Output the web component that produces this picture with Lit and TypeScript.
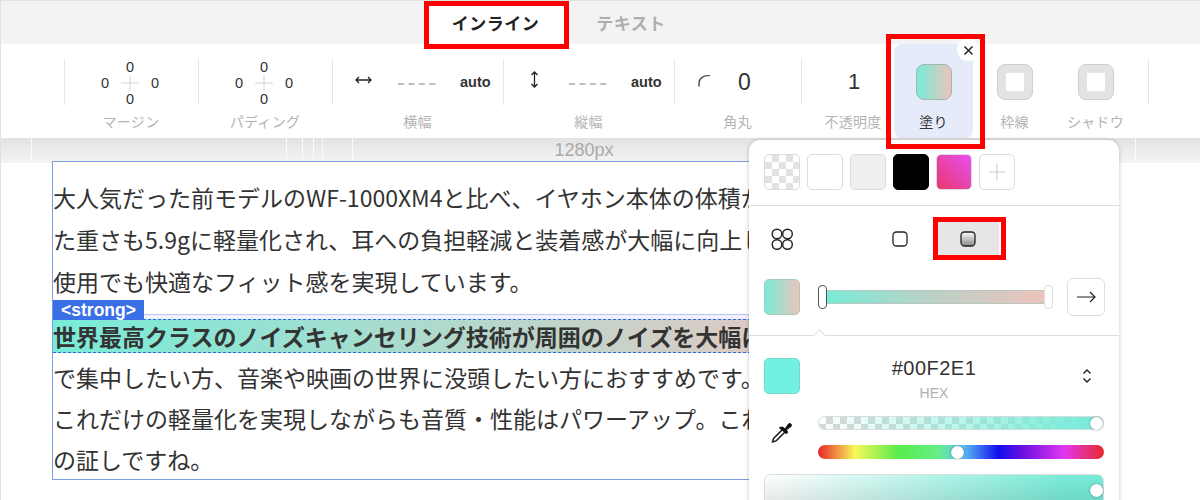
import { LitElement, html, css } from "lit";
import { customElement } from "lit/decorators.js";

const crossValue = () => html`<div class="cross">
  <span class="c-t">0</span><span class="c-l">0</span>
  <svg class="c-m" width="18" height="18" viewBox="0 0 18 18"><path d="M0 9H18M9 1V17" stroke="#d4d4d4" fill="none"/></svg>
  <span class="c-r">0</span><span class="c-b">0</span>
</div>`;

@customElement("app-root")
export class AppRoot extends LitElement {
  static styles = css`
    :host { display: block; width: 1200px; height: 500px; font-family: "Liberation Sans", "Noto Sans CJK JP", sans-serif; }
    * { box-sizing: border-box; }
    .app { position: relative; width: 1200px; height: 500px; overflow: hidden; display: flex; flex-direction: column; background: #fff; border-left: 1px solid #e2e2e2; border-top: 1px solid #e2e2e2; }

    .tabs { height: 43px; flex: none; background: #f3f3f3; display: flex; padding-left: 423px; }
    .tab { height: 43px; display: flex; align-items: center; justify-content: center; font: 700 17px "Noto Sans CJK JP", sans-serif; letter-spacing: .5px; }
    .tab.on { width: 143px; color: #222; background: #fff; }
    .tab.off { width: 128px; color: #aeaeae; }

    .toolbar { height: 94px; flex: none; background: #fff; display: flex; padding-left: 63px; }
    .group { display: flex; flex-direction: column; flex: none; }
    .ctl { height: 46px; margin-top: 15px; border-left: 1px solid #e6e6e6; display: flex; align-items: center; position: relative; }
    .lbl { font: 400 14px/20px "Noto Sans CJK JP", sans-serif; color: #b4b4b4; text-align: center; margin-top: 6px; letter-spacing: .3px; white-space: nowrap; }
    .w134 { width: 134px; } .w171 { width: 171px; } .w127 { width: 127px; }

    .cross { width: 70px; height: 46px; margin: 1px 0 0 30px; display: grid; grid-template-columns: 1fr 18px 1fr; grid-template-rows: 1fr 18px 1fr; place-items: center; font-size: 14.5px; color: #333; line-height: 14px; column-gap: 6px; }
    .c-t { grid-column: 2; grid-row: 1; } .c-l { grid-column: 1; grid-row: 2; } .c-m { grid-column: 2; grid-row: 2; } .c-r { grid-column: 3; grid-row: 2; } .c-b { grid-column: 2; grid-row: 3; }

    .size { padding-left: 22px; }
    .size svg { flex: none; margin-top: -5px; }
    .dash { width: 40px; margin-left: 25px; color: #bcbcbc; font-size: 24px; letter-spacing: 2.4px; white-space: nowrap; }
    .auto { margin-left: 23px; font-size: 14.5px; font-weight: 700; color: #333; }
    .radius { padding-left: 23px; }
    .radius svg { margin-top: -3px; }
    .radius b { font-weight: 400; font-size: 23px; color: #333; margin-left: 27px; }
    .op { width: 93px; }
    .op .ctl { justify-content: center; padding-left: 12px; font-size: 22px; color: #333; }
    .op .lbl { padding-left: 11px; }

    .tile { flex: none; display: flex; flex-direction: column; align-items: center; }
    .tile .sw { width: 36px; height: 36px; margin-top: 20px; border-radius: 8px; flex: none; }
    .tile .lbl { margin-top: 11px; }
    .fill { width: 79px; margin-right: 1px; background: #e6ebfa; border-radius: 8px; position: relative; }
    .fill .sw { background: linear-gradient(90deg, #78ecd8, #edc3bc); border: 1px solid #9fb8ad; }
    .fill .lbl { color: #333; }
    .other { width: 81px; }
    .other .sw { background: #e3e3e3; border: 1px solid #cfcfcf; display: flex; align-items: center; justify-content: center; }
    .other .sw i { display: block; width: 18px; height: 18px; background: #fff; }
    .close { position: absolute; top: -5px; right: -6px; width: 22px; height: 22px; border-radius: 50%; background: #fff; display: flex; align-items: center; justify-content: center; }
    .enddiv { margin-left: 12px; }
    .enddiv .ctl { width: 1px; }

    .ruler { height: 25px; flex: none; position: relative; background: linear-gradient(#e2e2e2, #f4f4f4); display: flex; justify-content: center; }
    .ruler span { font-size: 18px; line-height: 25px; color: #aaa; margin-left: -33px; }
    .rl { position: absolute; top: 0; bottom: 0; width: 1px; background: #fbfbfb; }

    .canvas { flex: 1; position: relative; overflow: hidden; margin-top: -2px; }
    .block { margin-left: 51px; width: 720px; border: 1px solid #7b9fe0; padding: 14px 0 0 0; height: 319px; background: #fff; font: 400 23px/42px "Noto Sans CJK JP", sans-serif; color: #333; white-space: nowrap; }
    .p2 { line-height: 41px; }
    .sel { height: 39px; margin: 12px 0 4px 0; position: relative; border-top: 1px solid #b9c6ee; background: linear-gradient(#f0f1fc, #f0f1fc) top / 100% 4px no-repeat; padding-top: 4px; }
    .sel strong { display: block; height: 34px; line-height: 32px; border-top: 1px dashed #2a6ae0; border-bottom: 1px dashed #2a6ae0; font-weight: 700; background: linear-gradient(90deg, #78ecd8, #dfcac4); }
    .tag { position: absolute; left: 0; top: -15px; width: 91px; height: 20px; background: #3a6fe6; color: #fff; font: 700 17.5px/20px "Liberation Sans", sans-serif; text-align: center; }

    .mark { position: absolute; border: 5px solid #f00; pointer-events: none; }
    .m1 { left: 423px; top: 0; width: 145px; height: 48px; }
    .m2 { left: 885px; top: 33px; width: 99px; height: 115px; }
    .m3 { left: 932px; top: 216px; width: 73px; height: 43px; }

    .pop { position: absolute; left: 748px; top: 139px; width: 370px; height: 400px; background: #fff; border-radius: 11px 11px 0 0; box-shadow: 0 0 4px rgba(0,0,0,.22); }
    .row1 { height: 66px; padding: 14px 0 0 15px; display: flex; gap: 7px; border-bottom: 1px solid #ddd; }
    .s { width: 36px; height: 36px; border-radius: 5px; border: 1px solid #dcdcdc; flex: none; display: flex; align-items: center; justify-content: center; }
    .checker { background: repeating-conic-gradient(#e2e2e2 0 25%, #fff 0 50%) 0 0 / 14px 14px; }
    .row2 { height: 65px; padding-left: 22px; display: flex; align-items: center; position: relative; }
    .row2 .i1 { margin-left: 99px; }
    .opt { margin-left: 28px; width: 63px; height: 33px; background: #e6e6e6; display: flex; align-items: center; justify-content: center; }
    .row3 { height: 65px; padding: 8px 0 0 15px; display: flex; border-bottom: 1px solid #ddd; position: relative; }
    .grad { background: linear-gradient(90deg, #78ecd8, #edc3bc); border-color: #a9c9bd; }
    .track { position: relative; margin: 11px 0 0 24px; width: 222px; height: 14px; background: linear-gradient(90deg, #78ecd8, #b7d2c6 45%, #edc3bc); border: 1px solid #b8c8c0; border-radius: 2px; flex: none; }
    .h { position: absolute; top: -6px; width: 9px; height: 24px; background: #fff; border-radius: 4px; }
    .h1 { left: -7px; border: 1px solid #555; }
    .h2 { right: -8px; border: 1px solid #ddd; }
    .arrow { width: 38px; height: 38px; margin: -1px 0 0 21px; border: 1px solid #ddd; border-radius: 6px; display: flex; align-items: center; justify-content: center; flex: none; }
    .notch { position: absolute; left: 66px; bottom: -5px; width: 9px; height: 9px; background: #fff; border-left: 1px solid #ddd; border-top: 1px solid #ddd; transform: rotate(45deg); }
    .row4 { padding: 22px 0 0 15px; display: flex; height: 80px; }
    .hex { width: 268px; text-align: center; flex: none; margin-top: -2px; }
    .hex b { display: block; font-weight: 400; font-size: 20px; line-height: 24px; color: #333; letter-spacing: .5px; }
    .hex small { display: block; font-size: 14px; line-height: 18px; color: #b0b0b0; margin-top: 4px; }
    .updown { margin: 10px 0 0 13px; }
    .row5 { display: flex; padding-left: 22px; height: 58px; }
    .sliders { margin-left: 25px; width: 286px; display: flex; flex-direction: column; gap: 15px; }
    .bar { height: 14px; border-radius: 7px; position: relative; }
    .alpha { background: linear-gradient(90deg, rgba(120,236,216,0), #78ecd8 95%), repeating-conic-gradient(#d8d8d8 0 25%, #fff 0 50%) 0 0 / 14px 14px; border: 1px solid #d5dedc; }
    .hue { background: linear-gradient(90deg, #e8282a, #f8f85a 13%, #58ec4a 28%, #66ee88 42%, #62c8f0 50%, #1010ee 63%, #7010e0 72%, #e038f0 86%, #e8282a); }
    .kn { position: absolute; top: 50%; width: 13px; height: 13px; margin-top: -6.5px; border-radius: 50%; background: #fff; box-shadow: 0 0 2px rgba(0,0,0,.5); }
    .sat { margin: 0 0 0 15px; width: 340px; height: 60px; border: 1px solid #ddd; border-radius: 7px; background: linear-gradient(#0000 0, #0003 100%), linear-gradient(90deg, #fff, #78ecd8 90%); position: relative; }
  `;

  render() {
    const rulerLines = [30, 285, 301, 312, 321, 351, 1134];
    return html`<div class="app">
      <div class="tabs">
        <div class="tab on">インライン</div>
        <div class="tab off">テキスト</div>
      </div>

      <div class="toolbar">
        <div class="group w134"><div class="ctl">${crossValue()}</div><div class="lbl">マージン</div></div>
        <div class="group w134"><div class="ctl">${crossValue()}</div><div class="lbl">パディング</div></div>
        <div class="group w171">
          <div class="ctl size">
            <svg width="17" height="10" viewBox="0 0 17 10"><path d="M1 5H16M4 2 1 5l3 3M13 2l3 3-3 3" stroke="#222" stroke-width="1.3" fill="none"/></svg>
            <span class="dash">----</span><span class="auto">auto</span>
          </div>
          <div class="lbl">横幅</div>
        </div>
        <div class="group w171">
          <div class="ctl size">
            <svg width="17" height="17" viewBox="0 0 17 17"><path d="M8.5 1V16M5.5 4l3-3 3 3M5.5 13l3 3 3-3" stroke="#222" stroke-width="1.3" fill="none"/></svg>
            <span class="dash">----</span><span class="auto">auto</span>
          </div>
          <div class="lbl">縦幅</div>
        </div>
        <div class="group w127">
          <div class="ctl radius">
            <svg width="13" height="13" viewBox="0 0 13 13"><path d="M1 12.500V9C1 5 4 1.500 12 1.500" stroke="#333" stroke-width="1.2" fill="none"/></svg>
            <b>0</b>
          </div>
          <div class="lbl">角丸</div>
        </div>
        <div class="group op"><div class="ctl">1</div><div class="lbl">不透明度</div></div>
        <div class="tile fill">
          <div class="sw"></div><div class="lbl">塗り</div>
          <div class="close"><svg width="11" height="11" viewBox="0 0 11 11"><path d="M1.500 1.500l8 8M9.500 1.500l-8 8" stroke="#222" stroke-width="1.5"/></svg></div>
        </div>
        <div class="tile other"><div class="sw"><i></i></div><div class="lbl">枠線</div></div>
        <div class="tile other"><div class="sw"><i></i></div><div class="lbl">シャドウ</div></div>
        <div class="group enddiv"><div class="ctl"></div></div>
      </div>

      <div class="ruler">
        ${rulerLines.map((x) => html`<div class="rl" style="left:${x}px"></div>`)}
        <span>1280px</span>
      </div>

      <div class="canvas">
        <div class="block">
          <div>大人気だった前モデルのWF-1000XM4と比べ、イヤホン本体の体積が</div>
          <div>た重さも5.9gに軽量化され、耳への負担軽減と装着感が大幅に向上し</div>
          <div>使用でも快適なフィット感を実現しています。</div>
          <div class="sel">
            <strong>世界最高クラスのノイズキャンセリング技術が周囲のノイズを大幅に</strong>
            <div class="tag">&lt;strong&gt;</div>
          </div>
          <div class="p2">で集中したい方、音楽や映画の世界に没頭したい方におすすめです。</div>
          <div class="p2">これだけの軽量化を実現しながらも音質・性能はパワーアップ。これ</div>
          <div class="p2">の証しですね。</div>
        </div>
      </div>

      <div class="pop">
        <div class="row1">
          <div class="s checker"></div>
          <div class="s" style="background:#fff"></div>
          <div class="s" style="background:#efefef"></div>
          <div class="s" style="background:#000;border-color:#000"></div>
          <div class="s" style="background:linear-gradient(45deg,#e8386e,#e84ff0)"></div>
          <div class="s"><svg width="16" height="16" viewBox="0 0 16 16"><path d="M8 0V16M0 8H16" stroke="#cfcfcf" stroke-width="1.2"/></svg></div>
        </div>
        <div class="row2">
          <svg width="22" height="22" viewBox="0 0 22 22"><g fill="none" stroke="#222" stroke-width="1.4"><circle cx="6" cy="6" r="4.8"/><circle cx="16.5" cy="6" r="4.8"/><circle cx="6" cy="16.5" r="4.8"/><circle cx="16.5" cy="16.5" r="4.8"/></g></svg>
          <svg class="i1" width="16" height="16" viewBox="0 0 16 16"><rect x="1" y="1" width="14" height="14" rx="3.5" fill="#fff" stroke="#222" stroke-width="1.3"/></svg>
          <div class="opt"><svg width="16" height="16" viewBox="0 0 16 16"><defs><linearGradient id="g" x1="0" y1="0" x2="0" y2="1"><stop offset="0" stop-color="#fff"/><stop offset="1" stop-color="#888"/></linearGradient></defs><rect x="1" y="1" width="14" height="14" rx="3.5" fill="url(#g)" stroke="#222" stroke-width="1.3"/></svg></div>
        </div>
        <div class="row3">
          <div class="s grad"></div>
          <div class="track"><div class="h h1"></div><div class="h h2"></div></div>
          <div class="arrow"><svg width="20" height="12" viewBox="0 0 20 12"><path d="M1 6H19M14 1l5 5-5 5" stroke="#222" stroke-width="1.2" fill="none"/></svg></div>
          <div class="notch"></div>
        </div>
        <div class="row4">
          <div class="s" style="background:#72f0e0;border-color:#74d8cb"></div>
          <div class="hex"><b>#00F2E1</b><small>HEX</small></div>
          <svg class="updown" width="12" height="16" viewBox="0 0 12 16"><path d="M2.500 5.500 6 2l3.500 3.500M2.500 10.500 6 14l3.500-3.500" stroke="#222" stroke-width="1.4" fill="none"/></svg>
        </div>
        <div class="row5">
          <svg width="22" height="22" viewBox="0 0 22 22" style="margin-top:6px;flex:none"><path d="M13 6 3 16c-1 1-.8 2.200-1.300 3.800 1.600-.5 2.800-.3 3.800-1.300L16 8" fill="#fff" stroke="#222" stroke-width="1.600"/><path d="M11.500 5 14 7l3.500-5c1.800-1.500 4 .8 2.500 2.500l-5 3.500 1.800 2.200-1.500 1.500-7-6z" fill="#111" stroke="#111"/></svg>
          <div class="sliders">
            <div class="bar alpha"><div class="kn" style="right:0"></div></div>
            <div class="bar hue"><div class="kn" style="left:133px"></div></div>
          </div>
        </div>
        <div class="sat"><div class="kn" style="right:0;top:15px"></div></div>
      </div>

      <div class="mark m1"></div>
      <div class="mark m2"></div>
      <div class="mark m3"></div>
    </div>`;
  }
}
